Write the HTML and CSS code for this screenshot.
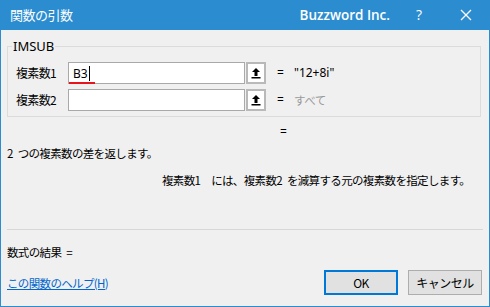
FILE: index.html
```html
<!DOCTYPE html>
<html lang="ja">
<head>
<meta charset="utf-8">
<link rel="stylesheet" href="styles.css">
</head>
<body>
<div class="window">
  <div class="titlebar">
    <span class="title">関数の引数</span>
    <span class="brand">Buzzword Inc.</span>
    <span class="help">?</span>
    <span class="close">
      <svg width="12" height="12" viewBox="0 0 12 12"><path d="M1 1L11 11M11 1L1 11" stroke="#fff" stroke-width="1.3" fill="none"/></svg>
    </span>
  </div>
  <div class="client">
    <fieldset class="group">
      <legend class="legend">IMSUB</legend>
      <div class="row first">
        <span class="label">複素数1</span>
        <div class="field"><span class="caret-text">B3</span><span class="squiggle"></span></div>
        <span class="ref-btn"><svg width="10" height="12" viewBox="0 0 10 12"><path d="M5 1L1 5H3.5V9H6.5V5H9Z" fill="#000"/><rect x="0.5" y="10" width="9" height="1.5" fill="#000"/></svg></span>
        <span class="eq">=</span>
        <span class="value">"12+8i"</span>
      </div>
      <div class="row">
        <span class="label">複素数2</span>
        <div class="field"></div>
        <span class="ref-btn"><svg width="10" height="12" viewBox="0 0 10 12"><path d="M5 1L1 5H3.5V9H6.5V5H9Z" fill="#000"/><rect x="0.5" y="10" width="9" height="1.5" fill="#000"/></svg></span>
        <span class="eq">=</span>
        <span class="value muted">すべて</span>
      </div>
    </fieldset>
    <div class="result-eq">=</div>
    <div class="desc">2 つの複素数の差を返します。</div>
    <div class="detail">複素数1　には、複素数2 を減算する元の複素数を指定します。</div>
    <div class="sep"></div>
    <div class="formula">数式の結果 =</div>
    <div class="footer">
      <a class="help-link" href="#">この関数のヘルプ(H)</a>
      <span class="spacer"></span>
      <button class="btn default">OK</button>
      <button class="btn">キャンセル</button>
    </div>
  </div>
</div>
</body>
</html>
```

FILE: styles.css
```css
html, body {
  margin: 0;
  padding: 0;
}
body {
  font-family: "Noto Sans CJK JP", "Noto Sans", sans-serif;
  font-size: 11.5px;
  color: #000;
}
.window {
  width: 490px;
  height: 307px;
  display: flex;
  flex-direction: column;
  background: #f0f0f0;
  overflow: hidden;
}
.titlebar {
  height: 30px;
  flex: none;
  background: #2b8dd0;
  color: #fff;
  display: flex;
  align-items: center;
  line-height: 16px;
}
.title {
  flex: 1;
  padding-left: 10px;
  font-size: 13px;
  letter-spacing: -0.5px;
}
.brand {
  font-family: "Open Sans", "Noto Sans", sans-serif;
  font-weight: 600;
  font-size: 13.5px;
}
.help {
  font-family: "Open Sans", sans-serif;
  font-size: 14px;
  margin-left: 26px;
  width: 10px;
}
.close {
  margin-left: 34px;
  margin-right: 18px;
  display: flex;
}
.client {
  flex: 1;
  min-height: 0;
  border: 1px solid #2b8dd0;
  border-top: 0;
  padding: 0 6px;
  display: flex;
  flex-direction: column;
  line-height: 16px;
  white-space: nowrap;
  letter-spacing: -0.65px;
  word-spacing: 3px;
}
.group {
  margin: 8px 2px 0 0;
  padding: 0 0 5px 8px;
  border: 1px solid #dcdcdc;
  min-width: 0;
}
.legend {
  font-family: "Noto Sans", sans-serif;
  font-size: 13px;
  line-height: 16px;
  letter-spacing: 0;
  color: #000;
  padding: 0 1px;
  margin-left: -4px;
}
.row {
  display: flex;
  align-items: center;
  height: 22px;
  margin-top: 5px;
}
.row.first {
  margin-top: 8px;
}
.label {
  width: 52px;
  font-size: 12px;
}
.field {
  position: relative;
  width: 177px;
  height: 22px;
  box-sizing: border-box;
  border: 1px solid #a9a9a9;
  background: #fff;
  display: flex;
  align-items: center;
  padding-left: 4px;
  font-family: "Noto Sans", sans-serif;
  font-size: 12px;
  letter-spacing: 0;
}
.caret-text {
  border-right: 1px solid #000;
  padding-right: 1px;
  line-height: 15px;
}
.squiggle {
  position: absolute;
  left: 0;
  top: 19px;
  width: 26px;
  height: 2px;
  background: #e8141b;
}
.ref-btn {
  width: 20px;
  height: 22px;
  box-sizing: border-box;
  margin-left: 1px;
  border: 2px solid #b9b9b9;
  background: #fff;
  display: flex;
  align-items: center;
  justify-content: center;
}
.eq {
  margin-left: 11px;
  width: 17px;
  font-family: "Noto Sans", sans-serif;
  font-size: 12px;
}
.value {
  font-family: "Noto Sans", sans-serif;
  font-size: 12px;
  letter-spacing: 0;
}
.value.muted {
  font-family: "Noto Sans CJK JP", sans-serif;
  font-size: 11.5px;
  letter-spacing: -0.5px;
  color: #9a9a9a;
}
.result-eq {
  margin-top: 7px;
  padding-left: 273px;
  font-family: "Noto Sans", sans-serif;
  font-size: 12px;
}
.desc {
  margin-top: 5px;
}
.detail {
  margin-top: 11px;
  padding-left: 155px;
}
.sep {
  margin-top: 41px;
  height: 1px;
  flex: none;
  background: #d7d7d7;
}
.formula {
  margin-top: 14px;
}
.footer {
  margin-top: 10px;
  margin-right: 1px;
  display: flex;
  align-items: center;
}
.help-link {
  color: #0066cc;
  text-decoration: underline;
  word-spacing: 0;
}
.spacer {
  flex: 1;
}
.btn {
  width: 74px;
  height: 25px;
  box-sizing: border-box;
  border: 1px solid #adadad;
  background: #e1e1e1;
  font-family: "Noto Sans CJK JP", "Noto Sans", sans-serif;
  font-size: 12px;
  line-height: 16px;
  letter-spacing: -0.5px;
  color: #000;
  padding: 0;
  margin-left: 10px;
}
.btn.default {
  border: 2px solid #0078d7;
}
```
